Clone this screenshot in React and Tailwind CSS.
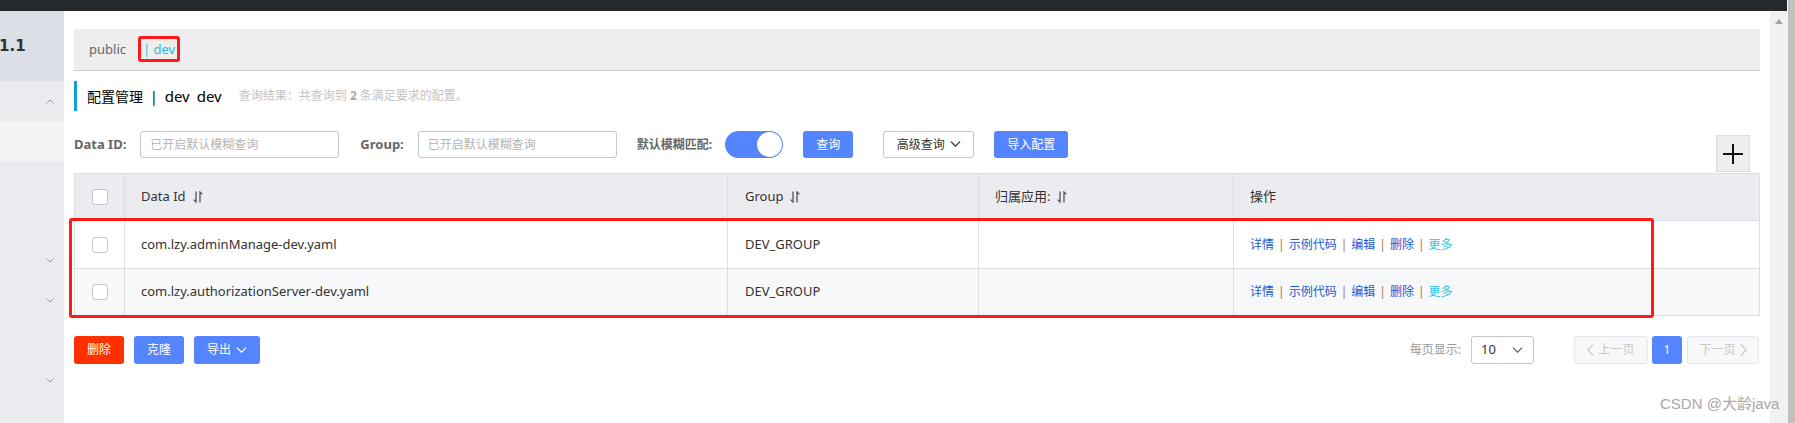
import React from "react";

const cols = "grid grid-cols-[50px_603px_251px_255px_1fr]";

function SortIcon() {
  return (
    <svg width="10" height="12" viewBox="0 0 10 12" className="ml-[7px]">
      <path d="M3 0.5V11L0.6 8.6" stroke="#555" strokeWidth="1.3" fill="none" />
      <path d="M7 11.5V1L9.4 3.4" stroke="#555" strokeWidth="1.3" fill="none" />
    </svg>
  );
}

function Chevron({ up, color = "#999", size = 8 }) {
  return (
    <svg width={size} height={size / 2 + 1} viewBox="0 0 8 5">
      <path d={up ? "M0.5 4.5L4 1L7.5 4.5" : "M0.5 0.5L4 4L7.5 0.5"} stroke={color} strokeWidth="1" fill="none" />
    </svg>
  );
}

function Checkbox() {
  return <div className="w-[16px] h-[16px] rounded-[3px] border border-[#c4c6cf] bg-white" />;
}

function Sidebar() {
  return (
    <div className="w-[64px] flex flex-col bg-[#e9ebef]">
      <div className="h-[70px] bg-[#dcdfe6] flex items-center text-[15px] font-bold text-[#333] font-['DejaVu_Sans',sans-serif] -ml-[1px]">
        1.1
      </div>
      <div className="h-[40px] flex items-center justify-end pr-[10px]">
        <Chevron up />
      </div>
      <div className="h-[40px] bg-[#f2f3f5]" />
      <div className="h-[79px]" />
      <div className="h-[40px] flex items-center justify-end pr-[10px]">
        <Chevron />
      </div>
      <div className="h-[40px] flex items-center justify-end pr-[10px]">
        <Chevron />
      </div>
      <div className="h-[40px]" />
      <div className="h-[40px] flex items-center justify-end pr-[10px]">
        <Chevron />
      </div>
    </div>
  );
}

function Ops() {
  const links = ["详情", "示例代码", "编辑", "删除"];
  return (
    <div className="flex items-center text-[12px]">
      {links.map((l) => (
        <React.Fragment key={l}>
          <span className="text-[#1b58d4]">{l}</span>
          <span className="mx-[4px] text-[#a07a4a]">|</span>
        </React.Fragment>
      ))}
      <span className="text-[#2cc3e4]">更多</span>
    </div>
  );
}

const rows = [
  { id: "com.lzy.adminManage-dev.yaml", bg: "bg-white", h: "h-[48px]" },
  { id: "com.lzy.authorizationServer-dev.yaml", bg: "bg-[#f7f8fa]", h: "h-[47px]" },
];

export default function App() {
  return (
    <div className="w-[1795px] h-[423px] flex overflow-hidden bg-white relative font-['Noto_Sans','Noto_Sans_CJK_SC',sans-serif] text-[#333]">
      <div className="flex-1 flex flex-col">
        <div className="h-[11px] bg-[#24292e] mr-[1px]" />
        <div className="flex-1 flex">
          <Sidebar />

          <main className="flex-1 px-[10px] pt-[18px]">
            {/* namespace tabs */}
            <div className="h-[42px] bg-[#eeeeee] border-b border-[#cccccc] flex items-center pl-[15px] text-[13px]">
              <span className="text-[#666]">public</span>
              <span className="ml-[17px] text-[#1fbfe0]">| dev</span>
            </div>

            {/* title */}
            <div className="mt-[10px] h-[30px] border-l-[3px] border-[#0e9fdc] pl-[10px] flex items-center">
              <span className="text-[14px] text-black">配置管理</span>
              <span className="mx-[7px] text-[14px] text-black">|</span>
              <span className="text-[15px] text-black">dev</span>
              <span className="ml-[7px] text-[15px] text-black">dev</span>
              <span className="ml-[17px] text-[12px] text-[#c3c3c3]">
                查询结果：共查询到 <b className="font-bold text-[#aaa]">2</b> 条满足要求的配置。
              </span>
            </div>

            {/* filters */}
            <div className="mt-[20px] h-[42px] flex items-start">
              <div className="h-[27px] flex items-center text-[13px] font-bold text-[#666]">Data ID:</div>
              <div className="ml-[14px] w-[199px] h-[27px] border border-[#c4c6cf] rounded-[3px] flex items-center pl-[9px] text-[12px] text-[#b5b5b5]">
                已开启默认模糊查询
              </div>
              <div className="ml-[21px] h-[27px] flex items-center text-[13px] font-bold text-[#666]">Group:</div>
              <div className="ml-[14px] w-[199px] h-[27px] border border-[#c4c6cf] rounded-[3px] flex items-center pl-[9px] text-[12px] text-[#b5b5b5]">
                已开启默认模糊查询
              </div>
              <div className="ml-[20px] h-[27px] flex items-center text-[12px] font-bold text-[#666]">默认模糊匹配:</div>
              <div className="ml-[13px] w-[58px] h-[27px] rounded-full bg-[#5584ff] flex items-center justify-end pr-[1px]">
                <div className="w-[25px] h-[25px] rounded-full bg-white" />
              </div>
              <button className="ml-[20px] w-[50px] h-[27px] rounded-[3px] bg-[#5584ff] text-white text-[12px]">查询</button>
              <button className="ml-[30px] w-[91px] h-[27px] rounded-[3px] border border-[#c4c6cf] bg-white text-[#333] text-[12px] flex items-center justify-center gap-[5px]">
                高级查询 <Chevron color="#333" size={11} />
              </button>
              <button className="ml-[20px] w-[74px] h-[27px] rounded-[3px] bg-[#5584ff] text-white text-[12px]">导入配置</button>
              <div className="ml-auto mr-[10px] mt-[4px] w-[34px] h-[37px] bg-[#eeeeee] border border-[#dddddd] flex items-center justify-center">
                <svg width="20" height="20" viewBox="0 0 20 20">
                  <path d="M10 0V20M0 10H20" stroke="#111" strokeWidth="2" />
                </svg>
              </div>
            </div>

            {/* table */}
            <div className="border border-[#dcdee3] border-b-0">
              <div className={`${cols} h-[47px] bg-[#ebecf0] border-b border-[#dcdee3] text-[13px]`}>
                <div className="flex items-center justify-center border-r border-[#dcdee3]">
                  <Checkbox />
                </div>
                <div className="flex items-center pl-[16px] border-r border-[#dcdee3]">
                  Data Id <SortIcon />
                </div>
                <div className="flex items-center pl-[17px] border-r border-[#dcdee3]">
                  Group <SortIcon />
                </div>
                <div className="flex items-center pl-[16px] border-r border-[#dcdee3]">
                  归属应用: <SortIcon />
                </div>
                <div className="flex items-center pl-[16px]">操作</div>
              </div>
              {rows.map((r) => (
                <div key={r.id} className={`${cols} ${r.h} ${r.bg} border-b border-[#dcdee3] text-[13px]`}>
                  <div className="flex items-center justify-center border-r border-[#dcdee3]">
                    <Checkbox />
                  </div>
                  <div className="flex items-center pl-[16px] border-r border-[#dcdee3]">{r.id}</div>
                  <div className="flex items-center pl-[17px] border-r border-[#dcdee3]">DEV_GROUP</div>
                  <div className="border-r border-[#dcdee3]" />
                  <div className="flex items-center pl-[16px]">
                    <Ops />
                  </div>
                </div>
              ))}
            </div>

            {/* footer */}
            <div className="mt-[20px] h-[28px] flex items-center text-[12px]">
              <button className="w-[50px] h-[28px] rounded-[3px] bg-[#ff3000] text-white">删除</button>
              <button className="ml-[10px] w-[50px] h-[28px] rounded-[3px] bg-[#5584ff] text-white">克隆</button>
              <button className="ml-[10px] w-[66px] h-[28px] rounded-[3px] bg-[#5584ff] text-white flex items-center justify-center gap-[5px]">
                导出 <Chevron color="#fff" size={11} />
              </button>

              <span className="ml-auto text-[#999]">每页显示:</span>
              <div className="ml-[10px] w-[63px] h-[28px] border border-[#c4c6cf] rounded-[3px] flex items-center justify-between pl-[9px] pr-[10px] text-[13px]">
                10 <Chevron color="#666" size={11} />
              </div>
              <div className="ml-[40px] w-[74px] h-[28px] border border-[#e6e7eb] bg-[#f7f8fa] rounded-[3px] flex items-center justify-center gap-[4px] text-[#c8c8c8]">
                <svg width="7" height="12" viewBox="0 0 7 12">
                  <path d="M6 0.5L0.8 6L6 11.5" stroke="#c8c8c8" strokeWidth="1.2" fill="none" />
                </svg>
                上一页
              </div>
              <div className="ml-[4px] w-[30px] h-[28px] rounded-[3px] bg-[#5584ff] text-white flex items-center justify-center">1</div>
              <div className="ml-[5px] mr-[1px] w-[72px] h-[28px] border border-[#e6e7eb] bg-[#f7f8fa] rounded-[3px] flex items-center justify-center gap-[4px] text-[#c8c8c8]">
                下一页
                <svg width="7" height="12" viewBox="0 0 7 12">
                  <path d="M1 0.5L6.2 6L1 11.5" stroke="#c8c8c8" strokeWidth="1.2" fill="none" />
                </svg>
              </div>
            </div>
          </main>

          <div className="w-[18px] bg-[#f1f1f1] flex justify-center pt-[8px]">
            <svg width="8" height="5" viewBox="0 0 8 5">
              <path d="M0 5L4 0L8 5Z" fill="#a3a3a3" />
            </svg>
          </div>
        </div>
      </div>
      <div className="w-[7px] bg-[#c1c1c1]" />

      {/* annotation boxes */}
      <div className="absolute left-[138px] top-[36px] w-[42px] h-[26px] border-[3px] border-[#ff1a1a] rounded-[3px]" />
      <div className="absolute left-[69px] top-[218px] w-[1585px] h-[100px] border-[3px] border-[#ff1a1a] rounded-[3px]" />

      {/* watermark */}
      <div className="absolute left-[1660px] top-[395px] text-[15px] leading-[17px] text-[#a8a8a8] font-['Liberation_Sans','Noto_Sans_CJK_SC',sans-serif]">
        CSDN @大龄java
      </div>
    </div>
  );
}
